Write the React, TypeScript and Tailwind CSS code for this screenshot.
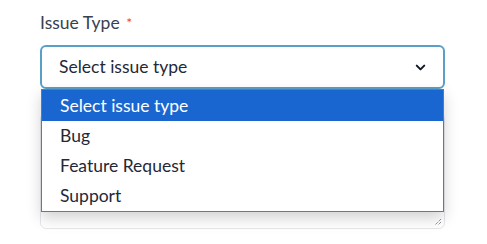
import { ChevronDown } from 'lucide-react';

const OPTIONS = ['Select issue type', 'Bug', 'Feature Request', 'Support'];

export default function App() {
  return (
    <div className="min-h-[244px] bg-white px-10 pt-[10px] font-['Lato',sans-serif] text-[17.5px]">
      <div className="relative w-[405px]">
        <label className="block leading-[26px] text-[#374151]">
          Issue Type <span className="ml-[2px] text-[14px] align-top text-[#ef4444]">*</span>
        </label>
        <div className="mt-[9px] flex h-[44px] items-center justify-between rounded-md border-2 border-[#5a9fc6] pl-[17px] pr-[15px] text-[#1f2937]">
          <span>Select issue type</span>
          <ChevronDown className="size-[15px] text-[#111827]" strokeWidth={3.25} />
        </div>

        {/* textarea behind the open menu */}
        <div className="relative mt-[24px] h-[116px] rounded-md border border-[#e5e7eb] bg-white">
          <svg className="absolute bottom-[2px] right-[2px]" width="8" height="8" viewBox="0 0 8 8">
            <path d="M7 1L1 7M7 4L4 7" stroke="#666" strokeWidth="1" strokeDasharray="1 1" />
          </svg>
        </div>

        {/* native-like open listbox */}
        <ul className="absolute left-px top-[79px] w-[403px] border border-[#767676] bg-white shadow-[0_6px_14px_rgba(0,0,0,0.18)]">
          {OPTIONS.map((opt, i) => (
            <li
              key={opt}
              className={
                i === 0
                  ? 'h-[31px] bg-[#1a66d1] pl-[18px] leading-[31px] text-white'
                  : 'h-[30px] pl-[18px] leading-[30px] text-[#1f2937]'
              }
            >
              {opt}
            </li>
          ))}
        </ul>
      </div>
    </div>
  );
}
